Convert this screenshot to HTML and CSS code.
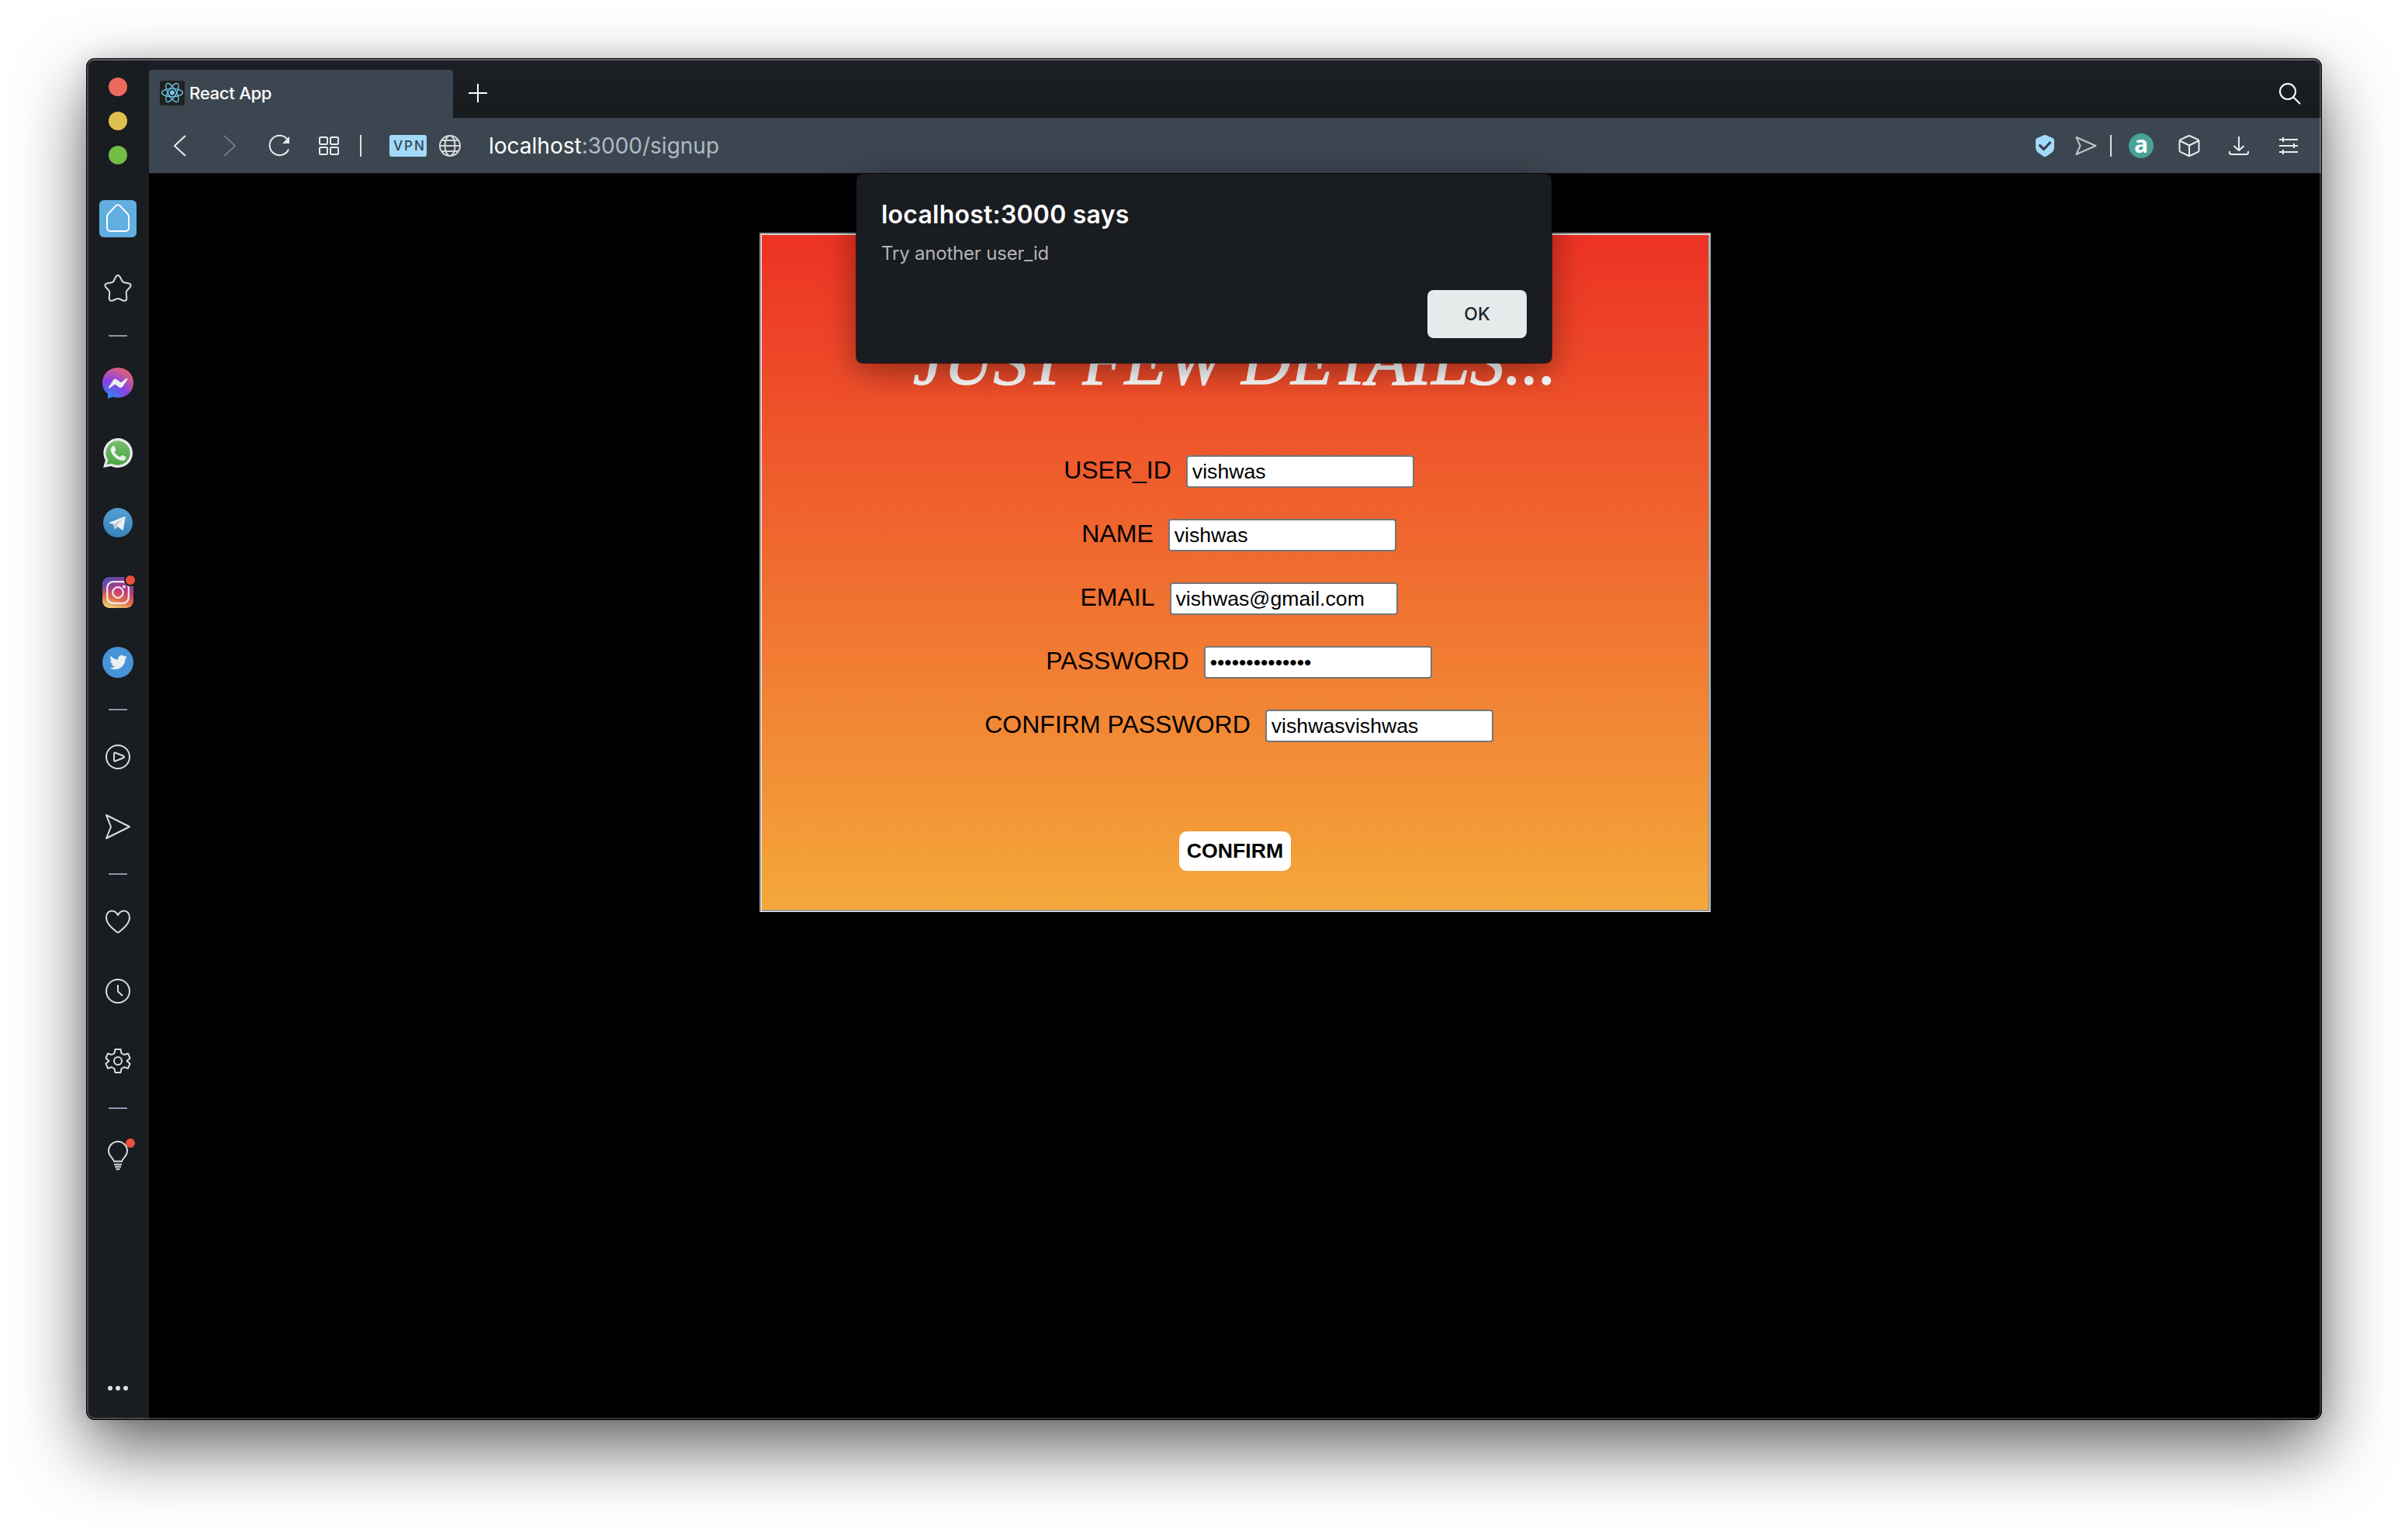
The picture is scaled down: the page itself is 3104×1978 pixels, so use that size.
FILE: index.html
```html
<!DOCTYPE html>
<html lang="en">
<head>
<meta charset="utf-8">
<title>React App</title>
<link rel="stylesheet" href="styles.css">
</head>
<body>
<div class="window">
  <aside class="sidebar">
    <div class="lights"><i class="light red"></i><i class="light yellow"></i><i class="light green"></i></div>
    <div class="item"><span class="home"><svg width="32" height="38" viewBox="0 0 32 38"><path d="M2 16v15a4 4 0 0 0 4 4h20a4 4 0 0 0 4-4V16a4 4 0 0 0-1.2-2.900L19 2.600a4 4 0 0 0-6 0L3.200 13.100A4 4 0 0 0 2 16z"/></svg></span></div>
    <div class="item"><svg width="40" height="40" viewBox="0 0 40 40"><path d="M17.300 5Q20 1 22.700 5L25.500 10.500Q26.300 12 28 12.300L33.500 13.300Q38.500 14.500 35.500 18.500L31.700 22.500Q30.500 24 30.700 26L31.300 32Q31.300 37 26.500 35.500L22 33.500Q20 32.700 18 33.500L13.500 35.500Q8.700 37 8.700 32L9.300 26Q9.500 24 8.300 22.500L4.500 18.500Q1.500 14.500 6.500 13.300L12 12.300Q13.700 12 14.500 10.500Z"/></svg></div>
    <hr>
    <div class="item"><svg width="40" height="40" viewBox="0 0 40 40"><defs><radialGradient id="msg" cx=".2" cy="1" r="1.150"><stop offset="0" stop-color="#2590ee"/><stop offset=".5" stop-color="#8840e8"/><stop offset="1" stop-color="#ee6a62"/></radialGradient></defs><path fill="url(#msg)" stroke="none" d="M20 0C8.500 0 0 8.300 0 19.500c0 6 2.500 11 7 14.500v6l6-2.300c2.200.7 4.500 1.100 7 1.100 11.500 0 20-8.300 20-19.400S31.500 0 20 0z"/><path fill="#eceef0" stroke="none" d="M8 25.500l6-9.500c1-1.500 3-1.900 4.500-.8l4.600 3.500c.5.300 1 .3 1.500 0l6.200-4.700c.8-.7 2 .3 1.400 1.300l-6 9.300c-1 1.500-3 1.900-4.500.8l-4.600-3.500c-.5-.3-1-.3-1.500 0l-6.200 4.700c-1 .6-2-.2-1.400-1.100z"/></svg></div>
    <div class="item"><svg width="40" height="40" viewBox="0 0 40 40"><defs><linearGradient id="wa" x2="0" y2="1"><stop offset="0" stop-color="#78bd6c"/><stop offset="1" stop-color="#4ba643"/></linearGradient></defs><path fill="#e9ebec" stroke="none" d="M20 1a19 19 0 0 1 0 38c-3.200 0-6-.7-8.700-2.100L1 39l2.900-9.500A19 19 0 0 1 20 1z"/><path fill="url(#wa)" stroke="none" d="M20 4.200a15.800 15.800 0 1 1-8 29.500L5.500 35l1.800-6A15.800 15.800 0 0 1 20 4.200z"/><path fill="#eceef0" stroke="none" d="M12 12.500c1.500-2 3.400-1.700 4 0l1.200 3c.4 1-.2 1.800-1.600 3.200 1.800 3.300 4.200 5.300 7.400 6.500 1.700-2.200 2.200-2.600 3.400-2l3.200 1.600c1.300.6.700 2.800-.6 3.900-3.200 2.600-8.400.8-12.600-2.900-4.700-4-7.300-9.500-4.400-13.300z"/></svg></div>
    <div class="item"><svg width="40" height="40" viewBox="0 0 40 40"><defs><linearGradient id="tg" x2="0" y2="1"><stop offset="0" stop-color="#529fd0"/><stop offset="1" stop-color="#3883bb"/></linearGradient></defs><circle cx="20" cy="20" r="19" fill="url(#tg)" stroke="none"/><path fill="#bccbdc" stroke="none" d="M13.500 21.500l16-9.500L18 27l-2 2z"/><path fill="#eceef0" stroke="none" d="M9 19.700L28.500 12c.8-.3 1.300.2 1.100 1L27 28.500c-.2 1-1 1.200-1.700.7L19.500 25 28 14 14.500 22 9 20.500z"/><path fill="#eceef0" stroke="none" d="M18 24l9-9.500V28z"/></svg></div>
    <div class="item"><svg width="40" height="40" viewBox="0 0 40 40"><defs><linearGradient id="igb" x1=".3" y1="1" x2=".6" y2="0"><stop offset="0" stop-color="#efce78"/><stop offset=".3" stop-color="#df6b45"/><stop offset=".6" stop-color="#bf397b"/><stop offset="1" stop-color="#7040a8"/></linearGradient><radialGradient id="iga" cx="0" cy="0" r=".6"><stop offset="0" stop-color="#3c55c0"/><stop offset="1" stop-color="#3c55c0" stop-opacity="0"/></radialGradient></defs><rect width="40" height="40" rx="9" fill="url(#igb)" stroke="none"/><rect width="40" height="40" rx="9" fill="url(#iga)" stroke="none"/><g stroke="#f0e9ec" stroke-width="2.200"><rect x="6.200" y="6.200" width="27.600" height="27.600" rx="7.500"/><circle cx="20" cy="20" r="6.800"/></g><circle cx="28" cy="12.500" r="1.900" fill="#f0e9ec" stroke="none"/></svg><b class="badge ig"></b></div>
    <div class="item"><svg width="40" height="40" viewBox="0 0 40 40"><circle cx="20" cy="20" r="20" fill="#4693d8" stroke="none"/><path fill="#eceef0" stroke="none" transform="translate(9.300 8.800) scale(.94)" d="M23.950 4.570a10 10 0 0 1-2.820.77 4.960 4.960 0 0 0 2.160-2.720c-.95.550-2 .95-3.130 1.180a4.920 4.920 0 0 0-8.380 4.480C7.690 8.100 4.070 6.130 1.640 3.160a4.820 4.820 0 0 0-.66 2.480c0 1.710.87 3.210 2.190 4.100a4.900 4.900 0 0 1-2.230-.62v.06a4.920 4.920 0 0 0 3.950 4.830 5 5 0 0 1-2.210.08 4.940 4.940 0 0 0 4.600 3.420A9.870 9.870 0 0 1 0 19.540a14 14 0 0 0 7.550 2.210c9.050 0 14-7.500 14-13.980 0-.21 0-.42-.02-.63a9.940 9.940 0 0 0 2.460-2.550z"/></svg></div>
    <hr>
    <div class="item"><svg width="40" height="40" viewBox="0 0 40 40"><circle cx="20" cy="20" r="15"/><path d="M15 16q0-2 2-1.300l10 4q2 1.300 0 2.600l-10 4q-2 .7-2-1.300z"/></svg></div>
    <div class="item"><svg width="40" height="40" viewBox="0 0 40 40"><path d="M5 5l30 15L5 35l6-15z"/></svg></div>
    <hr>
    <div class="item"><svg width="40" height="40" viewBox="0 0 40 40"><path d="M20 12c-2-4-5-5.500-8-5.500-4 0-7 3.500-7 8.500 0 8 8 14 13.500 18.700q1.500 1.200 3 0C27 29 35 23 35 15c0-5-3-8.500-7-8.500-3 0-6 1.500-8 5.500z"/></svg></div>
    <div class="item"><svg width="40" height="40" viewBox="0 0 40 40"><circle cx="20" cy="20" r="15"/><path d="M20 12v8.500l6 5.500"/></svg></div>
    <div class="item"><svg width="40" height="40" viewBox="0 0 40 40"><path d="M16.500 5h7l1 5 3.500 2 5-1.600 2.500 6L31.500 20l4 3.600-2.500 6L28 28l-3.500 2-1 5h-7l-1-5-3.500-2-5 1.600-2.500-6L8.500 20l-4-3.600 2.500-6L12 12l3.500-2z"/><circle cx="20" cy="20" r="5"/></svg></div>
    <hr>
    <div class="item"><svg width="40" height="40" viewBox="0 0 40 40"><path d="M15 27.500c0-3.500-7-6-7-13.500a12 12 0 0 1 24 0c0 7.500-7 10-7 13.500z"/><path d="M15 31.500h10M16 34.500h8M17.500 37.500h5"/></svg><b class="badge"></b></div>
    <div class="more"><i></i><i></i><i></i></div>
  </aside>
  <main class="main">
    <header class="tabs">
      <div class="tab"><svg class="react" width="32" height="32" viewBox="0 0 32 32"><rect width="32" height="32" rx="3" fill="#202122" stroke="none"/><g stroke="#6dcff0" stroke-width="1.300"><ellipse cx="16" cy="15.500" rx="13.500" ry="5.200"/><ellipse cx="16" cy="15.500" rx="13.500" ry="5.200" transform="rotate(60 16 15.500)"/><ellipse cx="16" cy="15.500" rx="13.500" ry="5.200" transform="rotate(120 16 15.500)"/></g><circle cx="16" cy="15.500" r="2.900" fill="#6dcff0" stroke="none"/></svg><span>React App</span></div>
      <svg class="plus" width="24" height="24" viewBox="0 0 24 24"><path d="M12 0v24M0 12h24"/></svg>
      <svg class="search" width="32" height="32" viewBox="0 0 32 32"><circle cx="13" cy="13" r="10"/><path d="M20.500 20.500l8.500 8.500"/></svg>
    </header>
    <nav class="toolbar">
      <svg class="nav" viewBox="0 0 32 32"><path d="M23 3L9 16l14 13"/></svg>
      <svg class="nav dim" viewBox="0 0 32 32"><path d="M9 3l14 13L9 29"/></svg>
      <svg class="nav" viewBox="0 0 32 32"><path d="M27 8.500A12.700 12.700 0 1 0 28 20.500"/><path fill="#e8edf3" stroke="none" d="M29 4v9h-9z"/></svg>
      <svg class="nav" viewBox="0 0 32 32"><rect x="4" y="5" width="10" height="9" rx="1.500"/><rect x="18" y="5" width="10" height="9" rx="1.500"/><rect x="4" y="18" width="10" height="9" rx="1.500"/><rect x="18" y="18" width="10" height="9" rx="1.500"/></svg>
      <span class="bar"></span>
      <span class="vpn">VPN</span>
      <svg class="globe" width="32" height="32" viewBox="0 0 32 32"><circle cx="16" cy="16" r="13"/><ellipse cx="16" cy="16" rx="6.500" ry="13"/><path d="M3 16h26M5.500 9h21M5.500 23h21"/></svg>
      <span class="url">localhost<em>:3000/signup</em></span>
      <div class="tools">
        <svg viewBox="0 0 32 32"><path fill="#a3dafb" stroke="none" d="M14 2.500q2-1 4 0l8 3.500q2 1 2 3v9q0 5-5 8l-5 3.500q-2 1-4 0L9 26q-5-3-5-8V9q0-2 2-3z"/><path d="M9.500 15.500l5 5 8-8.500" stroke="#35434f" stroke-width="3.200" stroke-linecap="round"/></svg>
        <svg class="fly" viewBox="0 0 32 32"><path d="M3.500 5l25 11-25 11 5-11z"/></svg>
        <span class="bar"></span>
        <span class="ext">a</span>
        <svg viewBox="0 0 32 32"><path d="M14.500 3.500q1.500-.8 3 0l9.500 4.300q1.500.7 1.500 2.500v11.400q0 1.800-1.500 2.500l-9.500 4.300q-1.500.8-3 0L5 24.200q-1.500-.7-1.500-2.500V10.300q0-1.800 1.500-2.500zM4 9.500l12 6 12-6M16 15.500V29"/></svg>
        <svg viewBox="0 0 32 32"><path d="M16 4v18M9.500 16l6.500 6 6.500-6M4 23v1.500q0 2.500 2.500 2.500h19q2.500 0 2.500-2.500V23"/></svg>
        <svg viewBox="0 0 32 32"><path d="M4 8h24M4 16h24M4 24h24M9 5v6M23 13v6M9 21v6"/></svg>
      </div>
    </nav>
    <section class="page">
      <form class="card">
        <h1>JUST FEW DETAILS...</h1>
        <label class="row"><span>USER_ID</span><input type="text" value="vishwas"></label>
        <label class="row"><span>NAME</span><input type="text" value="vishwas"></label>
        <label class="row"><span>EMAIL</span><input type="text" value="vishwas@gmail.com"></label>
        <label class="row"><span>PASSWORD</span><input type="password" value="vishwasvishwas"></label>
        <label class="row"><span>CONFIRM PASSWORD</span><input type="text" value="vishwasvishwas"></label>
        <button type="button" class="confirm">CONFIRM</button>
      </form>
      <div class="dialog">
        <h2>localhost:3000 says</h2>
        <p>Try another user_id</p>
        <button type="button" class="ok">OK</button>
      </div>
    </section>
  </main>
</div>
</body>
</html>
```
FILE: styles.css
```css
* { box-sizing: border-box; }
body { margin: 0; width: 3104px; height: 1978px; padding: 76px 112px 0; background: #fff; overflow: hidden; font-family: Inter, "Liberation Sans", sans-serif; }
svg { fill: none; stroke: #d9dee3; stroke-width: 2; stroke-linejoin: round; flex: none; }
.window { position: relative; display: flex; width: 2880px; height: 1754px; border-radius: 10px; background: #000; box-shadow: 0 0 0 1px #000, 0 36px 90px rgba(0,0,0,.62), 0 0 30px rgba(0,0,0,.12); }
.window::after { content: ""; position: absolute; inset: 0; border: 2px solid rgba(255,255,255,.2); border-top-color: rgba(255,255,255,.3); border-radius: 10px; pointer-events: none; }
.sidebar { width: 80px; background: #191c21; border-radius: 10px 0 0 10px; display: flex; flex-direction: column; align-items: center; }
.lights { height: 161px; padding-top: 24px; display: flex; flex-direction: column; gap: 20px; }
.light { width: 24px; height: 24px; border-radius: 50%; }
.red { background: #ed6a5e; }
.yellow { background: #e0c04c; }
.green { background: #72be47; }
.item { position: relative; width: 80px; height: 90px; display: flex; align-items: center; justify-content: center; }
.home { width: 48px; height: 48px; border-radius: 6px; background: #61aee0; display: flex; align-items: center; justify-content: center; }
.home svg { stroke: #fff; }
.sidebar hr { width: 24px; height: 2px; margin: 15px 0; border: 0; background: #8b98a8; }
.badge { position: absolute; left: 50px; top: 23px; width: 12px; height: 12px; border-radius: 50%; background: #ee4f3c; }
.badge.ig { box-shadow: 0 0 0 2px #191c21; }
.more { margin-top: auto; height: 86px; padding-top: 43px; display: flex; gap: 4px; }
.more i { width: 6px; height: 6px; border-radius: 50%; background: #dde1e5; }
.main { width: 2800px; }
.tabs { height: 76px; display: flex; align-items: center; background: linear-gradient(#1c1f25, #181b1d); border-radius: 0 10px 0 0; }
.tab { align-self: flex-end; width: 392px; height: 62px; padding: 0 0 2px 14px; display: flex; align-items: center; background: #3c4650; border-radius: 4px 4px 0 0; color: #fff; font-size: 22px; font-weight: 500; letter-spacing: -.25px; }
.tab span { margin-left: 6px; }
.plus { margin: 12px 0 0 20px; }
.plus, .search { stroke: #fff; }
.search { margin: 14px 24px 0 auto; }
.toolbar { height: 72px; display: flex; align-items: center; background: #3c4650; border-bottom: 1px solid #15181c; padding-left: 24px; }
.toolbar svg { stroke: #e8edf3; width: 32px; height: 32px; }
.toolbar .nav { margin-right: 32px; }
.toolbar .dim { stroke: #717a83; }
.bar { width: 2px; height: 28px; background: #dcdfe2; }
.toolbar > .bar { margin-left: -8px; }
.vpn { width: 48px; height: 28px; margin-left: 36px; border-radius: 3px; background: #a3dafb; color: #35434f; font-size: 17px; line-height: 28px; font-weight: 500; letter-spacing: 2px; padding-left: 5px; }
.toolbar .globe { margin-left: 14px; stroke: #d5d6d7; }
.url { margin-left: 34px; font-size: 28px; color: #fff; white-space: pre; }
.url em { font-style: normal; color: #aeb9c5; }
.tools { margin-left: auto; display: flex; align-items: center; padding-right: 26px; }
.tools svg { margin-left: 32px; }
.tools .fly { margin-left: 21px; stroke: #c0c5c9; }
.tools .bar { margin-left: 15px; }
.ext { width: 32px; height: 32px; margin: 0 -2px 0 22px; border-radius: 50%; background: #48a296; color: #fff; font: bold 30px/28px "Open Sans", sans-serif; text-align: center; }
.page { position: relative; height: 1606px; background: #000; padding: 76px 0 0 787px; border-radius: 0 0 10px 0; }
.card { width: 1226px; height: 876px; padding: 1px 2px 2px 1px; border: solid; border-width: 2px 1px 1px 2px; border-color: #9a9a9a #eee #eee #9a9a9a; box-shadow: inset 1px 1px #eee, inset -2px -2px #9a9a9a; background: linear-gradient(#ec3224, #f4a83b); display: flex; flex-direction: column; align-items: center; font-family: "Liberation Sans", sans-serif; }
.card h1 { margin: 110px 0 69px; height: 105px; color: #fff; font: italic 400 88px/105px "Liberation Serif", serif; letter-spacing: .5px; -webkit-text-stroke: 1.5px #fff; white-space: nowrap; }
.row { height: 42px; margin-bottom: 40px; padding-left: 10px; display: flex; align-items: center; font-size: 32px; line-height: 38px; color: #000; }
.row span { margin-bottom: 5px; }
.row input { width: 294px; height: 42px; margin: 0 0 0 19px; padding: 2px 6px; border: 2px solid #767676; border-radius: 4px; background: #fff; color: #000; font: 26.670px "Liberation Sans", sans-serif; }
.confirm { width: 144px; height: 51px; margin-top: 75px; padding: 0; border: 0; border-radius: 10px; background: #fff; color: #000; font: bold 26.670px "Liberation Sans", sans-serif; }
.dialog { position: absolute; left: 912px; top: 0; width: 896px; height: 244px; padding: 34px 32px 32px; border-radius: 8px; background: #191c21; box-shadow: 0 0 0 1px rgba(0,0,0,.6), 0 10px 40px rgba(0,0,0,.4); display: flex; flex-direction: column; }
.dialog h2 { margin: 0; color: #fff; font-size: 32px; line-height: 38px; font-weight: 600; letter-spacing: .22px; }
.dialog p { margin: 16px 0 0; color: #b3b4b6; font-size: 24px; line-height: 30px; letter-spacing: -.2px; }
.ok { align-self: flex-end; margin-top: 32px; width: 128px; height: 62px; border: 0; border-radius: 8px; background: #e6eaeb; color: #202327; font: 500 23px Inter, sans-serif; }
```
